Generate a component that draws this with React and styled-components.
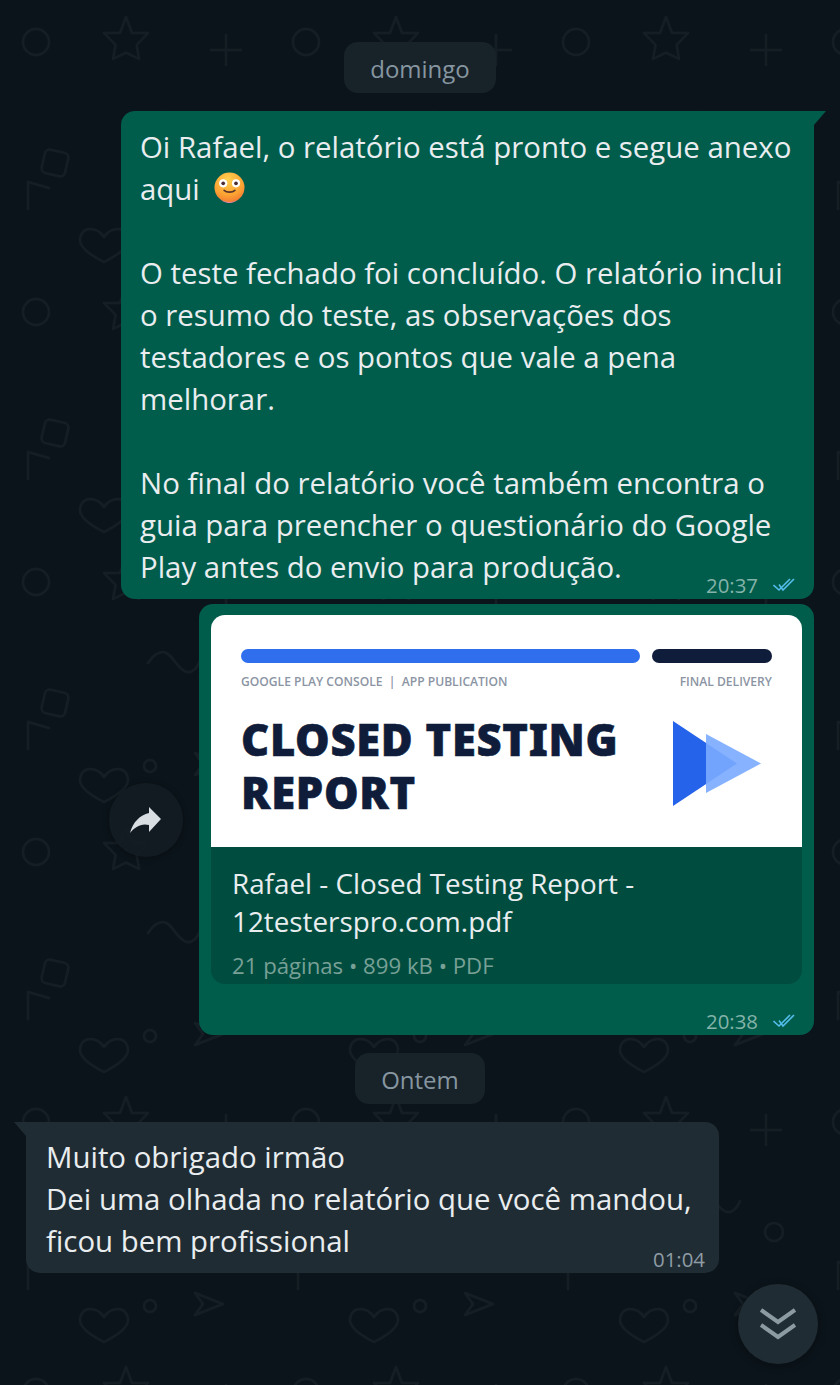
import styled, { createGlobalStyle } from "styled-components";

const tile = `<svg xmlns="http://www.w3.org/2000/svg" width="270" height="270" viewBox="0 0 270 270" fill="none" stroke="#151e24" stroke-width="2.5" stroke-linejoin="round" stroke-linecap="round">
<circle cx="36" cy="42" r="13"/>
<path d="M126 17 132 33 148 33 136.700 45 139 59 126 52.700 113 59 115.600 45 104 33 120 33Z"/>
<path d="M226 35V65M211 50H241"/>
<rect x="43" y="151" width="24" height="24" rx="5" transform="rotate(13 55 163)"/>
<path d="M49 188 28 182V209"/>
<path d="M104 237C100 231 95 229 90 229 84 229 80 234 80 240 80 248 92 256 104 262 116 256 128 248 128 240 128 234 124 229 118 229 113 229 108 231 104 237Z"/>
<circle cx="150" cy="226" r="6"/>
<path d="M195 213 223 224 195 235 203 224Z"/>
<path d="M148 123C152 117 157 112 163 112 172 112 177 130 187 132 193 133 197 128 200 121"/>
<circle cx="234" cy="152" r="9"/>
</svg>`;

const GlobalStyle = createGlobalStyle`
  html, body {
    margin: 0;
    padding: 0;
    background: #0b141a;
  }
  * {
    box-sizing: border-box;
  }
`;

const Chat = styled.div`
  position: relative;
  width: 840px;
  height: 1385px;
  overflow: hidden;
  padding: 42px 26px 0;
  display: flex;
  flex-direction: column;
  background-color: #0b141a;
  background-image: url("data:image/svg+xml,${encodeURIComponent(tile)}");
  background-size: 270px 270px;
  font-family: "Open Sans", "Noto Sans", sans-serif;
  color: #e9edef;
`;

const DayPill = styled.div`
  align-self: center;
  height: 51px;
  padding: 1px 26px 0;
  margin-bottom: 18px;
  display: flex;
  align-items: center;
  border-radius: 14px;
  background: #182229;
  color: #8696a0;
  font-size: 24px;
`;

const Bubble = styled.div`
  position: relative;
  width: ${(p) => p.$width}px;
  align-self: ${(p) => (p.$out ? "flex-end" : "flex-start")};
  background: ${(p) => (p.$out ? "#005c4b" : "#202c33")};
  border-radius: 14px;
  border-top-right-radius: ${(p) => (p.$tail && p.$out ? 0 : 14)}px;
  border-top-left-radius: ${(p) => (p.$tail && !p.$out ? 0 : 14)}px;
  margin-bottom: ${(p) => p.$gap}px;
`;

const TextBubble = styled(Bubble)`
  padding: ${(p) => (p.$out ? "15px 19px 11px" : "14px 20px 11px")};
`;

const Tail = styled.svg`
  position: absolute;
  top: 0;
  width: 12px;
  height: 14px;
  ${(p) => (p.$out ? "right: -12px;" : "left: -12px;")}
`;

const Body = styled.div`
  font-size: 29.4px;
  line-height: 42px;
  height: ${(p) => p.$lines * 42}px;
  white-space: pre;
`;

const Meta = styled.div`
  position: absolute;
  right: ${(p) => (p.$out ? 19 : 14)}px;
  bottom: 1px;
  display: flex;
  align-items: center;
  gap: 15px;
  font-size: 20.4px;
  line-height: 26px;
  color: ${(p) => (p.$out ? "#84b3a9" : "#8f9ca5")};
`;

const FileBubble = styled(Bubble)`
  padding: 11px 12px 51px;
`;

const Cover = styled.div`
  background: #fff;
  height: 232px;
  padding: 34px 30px 0;
  border-radius: 14px 14px 0 0;
`;

const Bars = styled.div`
  display: flex;
  gap: 12px;
`;

const Bar = styled.div`
  height: 14px;
  border-radius: 7px;
  width: ${(p) => p.$w}px;
  background: ${(p) => p.$color};
`;

const Labels = styled.div`
  display: flex;
  justify-content: space-between;
  margin-top: 11px;
  font-size: 12.1px;
  line-height: 16px;
  font-weight: 600;
  color: #8b94a3;
  white-space: pre;
`;

const TitleRow = styled.div`
  display: flex;
  justify-content: space-between;
  align-items: center;
  margin-top: 23px;
  padding-right: 11px;
`;

const Title = styled.div`
  font-family: "Noto Sans", sans-serif;
  font-weight: 900;
  font-size: 43.5px;
  letter-spacing: 0.7px;
  -webkit-text-stroke: 0.6px #0f1c3a;
  line-height: 53px;
  color: #0f1c3a;
  white-space: pre;
`;

const PlayMark = styled.svg`
  width: 88px;
  height: 85px;
  margin-bottom: 5px;
`;

const FileInfo = styled.div`
  height: 137px;
  padding: 17px 21px 0;
  background: #004d40;
  border-radius: 0 0 14px 14px;
`;

const FileName = styled.div`
  font-size: 27.8px;
  line-height: 38px;
  white-space: pre;
`;

const FileMeta = styled.div`
  margin-top: 11px;
  font-size: 22.2px;
  line-height: 30px;
  color: #78a096;
`;

const Forward = styled.button`
  position: absolute;
  left: -90px;
  top: 179px;
  width: 74px;
  height: 74px;
  padding: 0;
  border: 0;
  border-radius: 50%;
  display: flex;
  align-items: center;
  justify-content: center;
  background: rgba(19, 28, 35, 0.93);
  box-shadow: 0 1px 6px rgba(0, 0, 0, 0.25);
`;

const ScrollDown = styled.button`
  position: absolute;
  left: 738px;
  top: 1284px;
  width: 80px;
  height: 80px;
  padding: 0;
  border: 0;
  border-radius: 50%;
  display: flex;
  align-items: center;
  justify-content: center;
  background: #202c33;
  box-shadow: 0 2px 8px rgba(0, 0, 0, 0.25);
`;

const Emoji = styled.svg`
  width: 31px;
  height: 31px;
  vertical-align: -3px;
  margin-left: 7px;
`;

const Ticks = () => (
  <svg width="22" height="14" viewBox="0 0 22 14" fill="none" stroke="#53bdeb" strokeWidth="1.6">
    <path d="M0.500 7 6 12 17 1" />
    <path d="M6 6.500 10 12 21 1" />
  </svg>
);

const BubbleTail = ({ out, color }) => (
  <Tail $out={out} viewBox="0 0 12 14">
    <path d={out ? "M0 0H12L0 14Z" : "M12 0H0L12 14Z"} fill={color} />
  </Tail>
);

const FaceEmoji = () => (
  <Emoji viewBox="0 0 32 32">
    <defs>
      <radialGradient id="faceFill" cx="0.45" cy="0.25" r="0.8">
        <stop offset="0" stopColor="#ffd050" />
        <stop offset="0.65" stopColor="#fca132" />
        <stop offset="1" stopColor="#f07233" />
      </radialGradient>
    </defs>
    <circle cx="16" cy="16" r="15.500" fill="url(#faceFill)" />
    <path d="M7 28.500C11 31.800 21 31.800 25 28.500 21 31.500 19 32 16 32 13 32 10 31.500 7 28.500Z" fill="#f58ab0" />
    <circle cx="9.500" cy="11.700" r="4.200" fill="#fff" />
    <circle cx="22.700" cy="11.700" r="4.200" fill="#fff" />
    <circle cx="9.500" cy="11.700" r="1.900" fill="#4a2c32" />
    <circle cx="22.700" cy="11.700" r="1.900" fill="#4a2c32" />
    <path d="M10.500 19C13 21.500 19 21.500 21.500 19" fill="none" stroke="#5a3228" strokeWidth="1.800" strokeLinecap="round" />
  </Emoji>
);

export default function App() {
  return (
    <>
      <GlobalStyle />
      <Chat>
        <DayPill>domingo</DayPill>

        <TextBubble $out $tail $width={693} $gap={5}>
          <BubbleTail out color="#005c4b" />
          <Body $lines={11}>
            {"Oi Rafael, o relatório está pronto e segue anexo\naqui "}
            <FaceEmoji />
            {"\n\nO teste fechado foi concluído. O relatório inclui\no resumo do teste, as observações dos\ntestadores e os pontos que vale a pena\nmelhorar.\n\nNo final do relatório você também encontra o\nguia para preencher o questionário do Google\nPlay antes do envio para produção."}
          </Body>
          <Meta $out>
            20:37
            <Ticks />
          </Meta>
        </TextBubble>

        <FileBubble $out $width={615} $gap={18}>
          <Cover>
            <Bars>
              <Bar $w={399} $color="#2f6fed" />
              <Bar $w={120} $color="#0f1c3a" />
            </Bars>
            <Labels>
              <span>{"GOOGLE PLAY CONSOLE  |  APP PUBLICATION"}</span>
              <span>FINAL DELIVERY</span>
            </Labels>
            <TitleRow>
              <Title>{"CLOSED TESTING\nREPORT"}</Title>
              <PlayMark viewBox="0 0 88 85">
                <path d="M0 0 64 42.500 0 85Z" fill="#2563eb" />
                <path d="M33 13 88 42.500 33 72Z" fill="#7aaaff" fillOpacity="0.91" />
              </PlayMark>
            </TitleRow>
          </Cover>
          <FileInfo>
            <FileName>{"Rafael - Closed Testing Report -\n12testerspro.com.pdf"}</FileName>
            <FileMeta>21 páginas • 899 kB • PDF</FileMeta>
          </FileInfo>
          <Meta $out>
            20:38
            <Ticks />
          </Meta>
          <Forward>
            <svg width="32" height="27" viewBox="0 0 32 27" fill="#d9dee3">
              <path d="M19 0 31 12 19 25V18C11 16 5 20 0 26 3 15 10 8 19 6Z" />
            </svg>
          </Forward>
        </FileBubble>

        <DayPill>Ontem</DayPill>

        <TextBubble $tail $width={693} $gap={0}>
          <BubbleTail color="#202c33" />
          <Body $lines={3}>
            {"Muito obrigado irmão\nDei uma olhada no relatório que você mandou,\nficou bem profissional"}
          </Body>
          <Meta>01:04</Meta>
        </TextBubble>

        <ScrollDown>
          <svg width="36" height="32" viewBox="0 0 36 32" fill="none" stroke="#8c9aa2" strokeWidth="4">
            <path d="M1 2 18 14 35 2" />
            <path d="M1 17 18 29 35 17" />
          </svg>
        </ScrollDown>
      </Chat>
    </>
  );
}
